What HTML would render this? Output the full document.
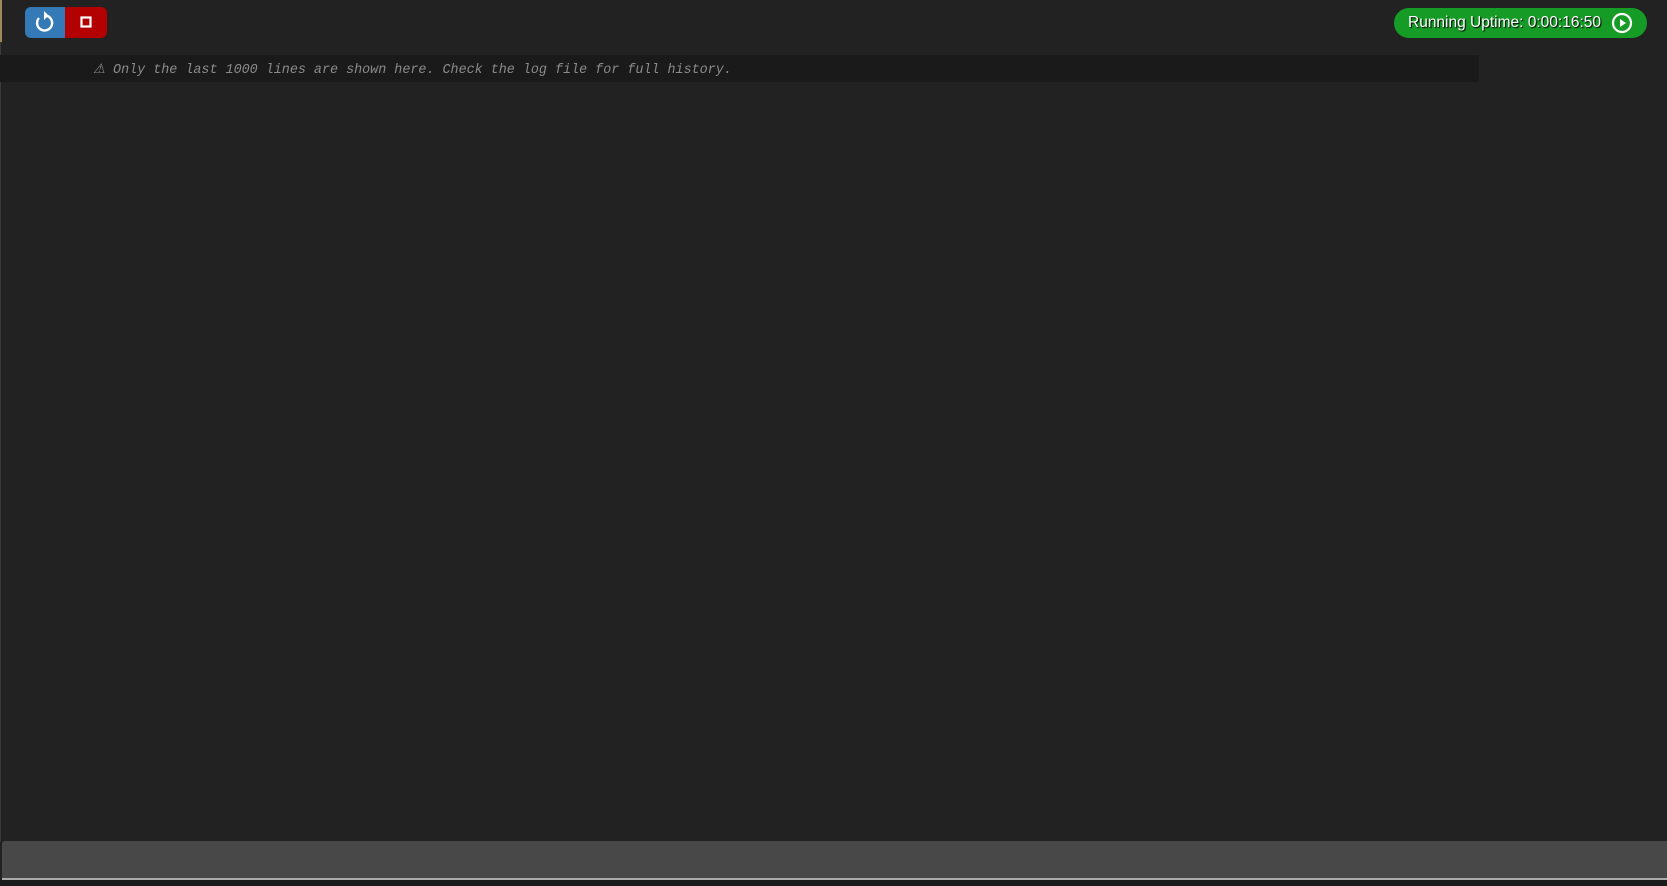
<!DOCTYPE html>
<html><head><meta charset="utf-8"><style>
html,body{margin:0;padding:0;width:1667px;height:886px;background:#222;overflow:hidden;position:relative;font-family:"Liberation Sans",sans-serif}
.b{position:absolute;top:7px;height:31px}
.blue{left:25px;width:40px;background:#337ab7;border-radius:6px 0 0 6px}
.red{left:65px;width:42px;background:#b30000;border-radius:0 6px 6px 0}
.pill{position:absolute;left:1394px;top:8px;width:253px;height:30px;background:#169b26;border-radius:15px;color:#fff;font-size:15.5px;line-height:30px;text-shadow:1px 1px 1px #000}
.log{position:absolute;left:0;top:55px;width:1479px;height:27px;background:#1a1a1a}
.log span{position:absolute;left:93px;top:7px;font:italic 13.4px "Liberation Mono",monospace;color:#8a8a8a;white-space:nowrap}
.bar{position:absolute;left:2px;top:841px;width:1665px;height:37px;background:#484848;border-radius:3px 0 0 0}
.line{position:absolute;left:2px;top:878px;width:1665px;height:2px;background:#aaa}
.bot{position:absolute;left:0;top:880px;width:1667px;height:6px;background:#1a1a1a}
</style></head><body>
<div style="position:absolute;left:0;top:0;width:2px;height:42px;background:#a08a5a"></div>
<div style="position:absolute;left:0;top:42px;width:1px;height:800px;background:#3a3a3a"></div>
<div class="b blue"><svg width="40" height="31" viewBox="0 0 40 31"><path d="M14 11 A7.5 7.5 0 1 0 20 8.5" fill="none" stroke="#fff" stroke-width="2.4"/><path d="M19 4 L19 13 L23.5 8.5 Z" fill="#fff"/></svg></div>
<div class="b red"><svg width="42" height="31" viewBox="0 0 42 31"><rect x="16.5" y="10.5" width="9" height="9" fill="none" stroke="#fff" stroke-width="2.2"/></svg></div>
<div class="pill"><span style="position:absolute;left:14px;white-space:nowrap">Running Uptime: 0:00:16:50</span><svg style="position:absolute;left:217px;top:4px" width="22" height="22" viewBox="0 0 22 22"><circle cx="11" cy="11" r="9" fill="none" stroke="#fff" stroke-width="2.2"/><path d="M9 7 L15 11 L9 15 Z" fill="#fff"/></svg></div>
<div class="log"><span>⚠ Only the last 1000 lines are shown here. Check the log file for full history.</span></div>
<div class="bar"></div><div class="line"></div><div class="bot"></div>
</body></html>
